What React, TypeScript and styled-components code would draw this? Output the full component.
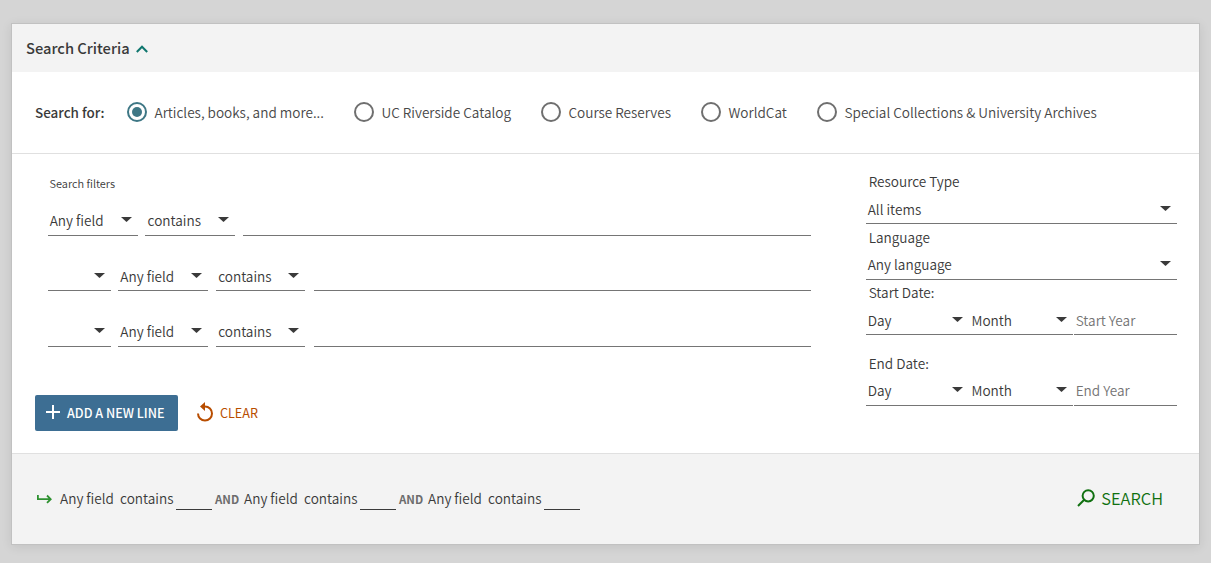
import React from "react";
import styled, { createGlobalStyle } from "styled-components";

const GlobalStyle = createGlobalStyle`
  * { box-sizing: border-box; }
  body {
    margin: 0;
    background: #d5d5d5;
    color: #3a3a3a;
    font-family: "Source Sans Pro", "Noto Sans CJK SC", sans-serif;
    font-size: 13.58px;
    font-weight: 350;
    line-height: 20px;
  }
`;

const Page = styled.main`
  height: 563px;
  padding: 23px 11px 18px;
  overflow: hidden;
`;

const Card = styled.form`
  display: flex;
  flex-direction: column;
  height: 522px;
  border: 1px solid #c1c1c1;
  background: #fff;
  box-shadow: 0 2px 10px rgba(0, 0, 0, 0.09);
`;

const Header = styled.header`
  display: flex;
  align-items: center;
  gap: 6px;
  height: 48px;
  padding: 0 14px 0;
  background: #f3f3f3;

  svg {
    margin-top: 2px;
  }
`;

const Title = styled.h1`
  margin: 0;
  padding-bottom: 1px;
  font-size: 14.7px;
  font-weight: 500;
  white-space: nowrap;
`;

const Scope = styled.div`
  display: flex;
  align-items: center;
  height: 82px;
  padding: 0 23px;
  border-bottom: 1px solid #e0e0e0;
`;

const ScopeTitle = styled.span`
  width: 92px;
  padding-bottom: 2px;
  font-size: 13.45px;
  font-weight: 500;
  white-space: nowrap;
`;

const RadioLabel = styled.label<{ $width: number }>`
  display: flex;
  align-items: center;
  gap: 7.5px;
  flex: none;
  width: ${(p) => p.$width}px;
  margin-right: 30px;
  padding-bottom: 2px;
  color: #484848;
  white-space: nowrap;
`;

const Radio = styled.span<{ $checked: boolean }>`
  display: grid;
  place-items: center;
  width: 20px;
  height: 20px;
  margin-top: 1px;
  border: 2px solid ${(p) => (p.$checked ? "#3e7785" : "#6f6f6f")};
  border-radius: 50%;
  &::after {
    content: "";
    width: 10px;
    height: 10px;
    border-radius: 50%;
    background: ${(p) => (p.$checked ? "#3e7785" : "transparent")};
  }
`;

const Body = styled.section`
  display: flex;
  justify-content: space-between;
  height: 300px;
  padding: 15px 22px 0 23px;
  border-bottom: 1px solid #e0e0e0;
`;

const Filters = styled.div`
  display: flex;
  flex-direction: column;
  width: 776px;
`;

const FiltersTitle = styled.div`
  height: 37px;
  padding: 4px 0 0 14.5px;
  font-size: 10.95px;
`;

const Line = styled.div<{ $height: number }>`
  display: flex;
  height: ${(p) => p.$height}px;
  margin: 0 0 26px 13px;
`;

const Field = styled.div<{ $width?: number; $gap?: number; $height?: number; $pad?: number; $muted?: boolean }>`
  display: flex;
  align-items: flex-start;
  justify-content: space-between;
  flex: ${(p) => (p.$width ? "none" : 1)};
  width: ${(p) => (p.$width ? `${p.$width}px` : "auto")};
  height: ${(p) => (p.$height ? `${p.$height}px` : "100%")};
  margin-right: ${(p) => p.$gap ?? 0}px;
  padding: 4px 6px 0 ${(p) => p.$pad ?? 1.7}px;
  border-bottom: 1px solid #757575;
  color: ${(p) => (p.$muted ? "#757575" : "inherit")};
  white-space: nowrap;
`;

const CaretIcon = styled.svg`
  flex: none;
  width: 11px;
  height: 5px;
  margin: 7px 0 0 auto;
  fill: #3a3a3a;
`;

const Actions = styled.div`
  display: flex;
  align-items: center;
  margin-top: 22px;
`;

const AddButton = styled.button`
  display: flex;
  align-items: center;
  gap: 7px;
  width: 143px;
  height: 36px;
  padding: 0 0 0 11px;
  border: 0;
  border-radius: 2px;
  background: #3d6e93;
  color: #fff;
  font: 500 12.6px/20px "Source Sans Pro", "Noto Sans CJK SC", sans-serif;
  white-space: nowrap;

  svg {
    margin-bottom: 2px;
  }
`;

const ClearButton = styled(AddButton)`
  width: auto;
  padding-left: 18px;
  gap: 6px;
  background: transparent;
  color: #b84d00;
  font-weight: 400;
`;

const Facets = styled.div`
  display: flex;
  flex-direction: column;
  width: 311px;
`;

const FacetLabel = styled.div<{ $top?: number; $shift?: number }>`
  height: 26px;
  margin-top: ${(p) => p.$top ?? 0}px;
  padding: ${(p) => 2 + (p.$shift ?? 0)}px 0 0 2.7px;
`;

const DateRow = styled.div<{ $height: number }>`
  display: flex;
  height: ${(p) => p.$height}px;
`;

const Footer = styled.footer`
  display: flex;
  align-items: center;
  justify-content: space-between;
  flex: 1;
  padding: 0 36px 0 24px;
  background: #f3f3f3;
`;

const Query = styled.div`
  display: flex;
  align-items: center;
  white-space: nowrap;
`;

const Clause = styled.span<{ $width: number }>`
  display: flex;
  width: ${(p) => p.$width}px;
  padding-bottom: 2px;
  justify-content: space-between;
`;

const Blank = styled.span`
  width: 36px;
  height: 21px;
  margin-left: 2.5px;
  border-bottom: 1px solid #3a3a3a;
`;

const Operator = styled.span`
  width: 29px;
  margin-left: 3px;
  color: #6c6c6c;
  font-size: 11.5px;
  font-weight: 700;
`;

const SearchButton = styled.button`
  display: flex;
  align-items: center;
  gap: 6px;
  padding: 0 0 2px;
  border: 0;
  background: none;
  color: #107010;
  font: 350 16.4px/20px "Source Sans Pro", "Noto Sans CJK SC", sans-serif;
`;

const Caret = () => (
  <CaretIcon viewBox="0 0 11 5">
    <path d="M0 0h11L5.5 5z" />
  </CaretIcon>
);

const scopes = [
  { label: "Articles, books, and more...", width: 197 },
  { label: "UC Riverside Catalog", width: 157 },
  { label: "Course Reserves", width: 130 },
  { label: "WorldCat", width: 86 },
  { label: "Special Collections & University Archives", width: 281 },
];

const FilterLine = ({ height, first }: { height: number; first?: boolean }) => (
  <Line $height={height}>
    {!first && (
      <Field $width={63} $gap={7}>
        <Caret />
      </Field>
    )}
    <Field $width={90} $gap={first ? 7 : 8} $pad={first ? 1.7 : 2.3}>
      Any field
      <Caret />
    </Field>
    <Field $width={first ? 90 : 89} $gap={first ? 8 : 9} $pad={first ? 2.6 : 2.2}>
      contains
      <Caret />
    </Field>
    <Field />
  </Line>
);

const DateFields = ({ height, year }: { height: number; year: string }) => (
  <DateRow $height={height}>
    <Field $width={103}>
      Day
      <Caret />
    </Field>
    <Field $width={104} $gap={1} $pad={2.5}>
      Month
      <Caret />
    </Field>
    <Field $muted>{year}</Field>
  </DateRow>
);

export default function App() {
  return (
    <Page>
      <GlobalStyle />
      <Card>
        <Header>
          <Title>Search Criteria</Title>
          <svg width="12" height="8" viewBox="0 0 12 8" fill="none" stroke="#0f766e" strokeWidth="2">
            <path d="M0.8 7L6 1.7L11.2 7" />
          </svg>
        </Header>
        <Scope>
          <ScopeTitle>Search for:</ScopeTitle>
          {scopes.map((s, i) => (
            <RadioLabel key={s.label} $width={s.width}>
              <Radio $checked={i === 0} />
              {s.label}
            </RadioLabel>
          ))}
        </Scope>
        <Body>
          <Filters>
            <FiltersTitle>Search filters</FiltersTitle>
            <FilterLine first height={30} />
            <FilterLine height={29} />
            <FilterLine height={30} />
            <Actions>
              <AddButton type="button">
                <svg width="14" height="14" viewBox="0 0 14 14" stroke="#fff" strokeWidth="2">
                  <path d="M7 0v14M0 7h14" />
                </svg>
                ADD A NEW LINE
              </AddButton>
              <ClearButton type="button">
                <svg width="18" height="20" viewBox="0 0 18 20" fill="none" stroke="#b84d00" strokeWidth="2">
                  <path d="M2 11.5A7 7 0 1 0 9 4.5H6.5" />
                  <path d="M9 0v9L4 4.5z" fill="#b84d00" stroke="none" />
                </svg>
                CLEAR
              </ClearButton>
            </Actions>
          </Filters>
          <Facets>
            <FacetLabel>Resource Type</FacetLabel>
            <Field $width={311} $height={29}>
              All items
              <Caret />
            </Field>
            <FacetLabel $shift={1}>Language</FacetLabel>
            <Field $width={311} $height={30}>
              Any language
              <Caret />
            </Field>
            <FacetLabel>Start Date:</FacetLabel>
            <DateFields height={29} year="Start Year" />
            <FacetLabel $top={15} $shift={1}>
              End Date:
            </FacetLabel>
            <DateFields height={30} year="End Year" />
          </Facets>
        </Body>
        <Footer>
          <Query>
            <svg width="24" height="12" viewBox="0 0 24 12" fill="none" stroke="#2e9130" strokeWidth="1.8">
              <path d="M1.9 2v4.2h13M11 2.5L14.7 6.2L11 9.9" />
            </svg>
            {[0, 1, 2].map((n) => (
              <React.Fragment key={n}>
                {n > 0 && <Operator>AND</Operator>}
                <Clause $width={113.5}>
                  <span>Any field</span>
                  <span>contains</span>
                </Clause>
                <Blank />
              </React.Fragment>
            ))}
          </Query>
          <SearchButton type="button">
            <svg width="18" height="18" viewBox="0 0 18 18" fill="none" stroke="#107010" strokeWidth="2">
              <circle cx="11.2" cy="6.8" r="5.6" />
              <path d="M7.2 10.8L1 17" />
            </svg>
            SEARCH
          </SearchButton>
        </Footer>
      </Card>
    </Page>
  );
}
